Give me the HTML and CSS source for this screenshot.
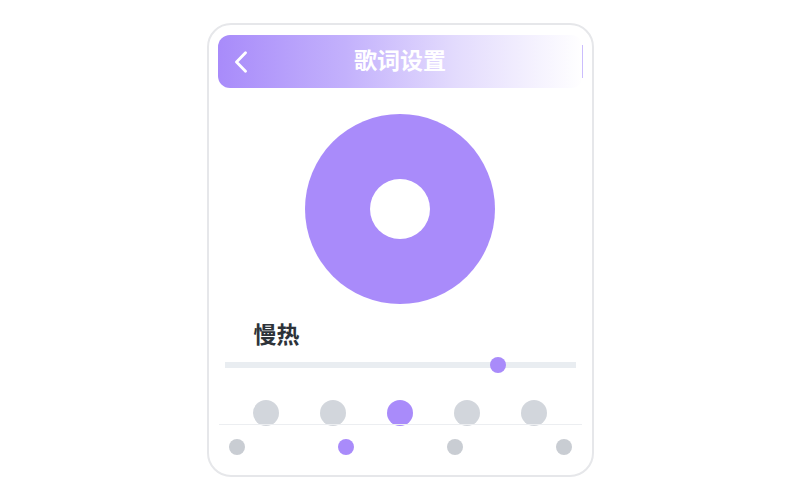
FILE: index.html
```html
<!DOCTYPE html>
<html lang="zh">
<head>
<meta charset="utf-8">
<link rel="stylesheet" href="styles.css">
</head>
<body>
<div class="card">
  <div class="header">
    <svg class="back" width="16" height="22" viewBox="0 0 16 22"><path d="M12.5 1.8 L3.5 11 L12.5 20.2" fill="none" stroke="#fff" stroke-width="2.8" stroke-linecap="round" stroke-linejoin="round"/></svg>
    <div class="title">歌词设置</div>
    <div></div>
  </div>
  <div class="donut"><div class="hole"></div></div>
  <div class="label">慢热</div>
  <div class="slider"><div class="thumb" style="left: 77.8%"></div></div>
  <div class="sizes">
    <span class="big"></span>
    <span class="big"></span>
    <span class="big on"></span>
    <span class="big"></span>
    <span class="big"></span>
  </div>
  <div class="speeds">
    <span class="small"></span>
    <span class="small on"></span>
    <span class="small"></span>
    <span class="small"></span>
  </div>
</div>
</body>
</html>
```

FILE: styles.css
```css
* { box-sizing: border-box; }
html, body { margin: 0; padding: 0; background: #fff; }
body {
  font-family: "Noto Sans CJK SC", "Noto Sans", sans-serif;
  padding-top: 23px;
}
.card {
  width: 387px;
  height: 454px;
  margin: 0 auto;
  border: 2px solid #e6e7ea;
  border-radius: 24px;
  padding: 10px 9px 0 9px;
  display: flex;
  flex-direction: column;
}
.header {
  position: relative;
  height: 53px;
  border-radius: 12px;
  background: linear-gradient(90deg, #a88bfa 0%, #c3b1fc 35%, #e3dbfd 65%, #ffffff 100%);
  display: grid;
  grid-template-columns: 1fr auto 1fr;
  align-items: center;
  padding-left: 15px;
}
.header::after {
  content: "";
  position: absolute;
  right: 0;
  top: 10px;
  height: 33px;
  width: 1px;
  background: #cbbdfd;
}
.back { display: block; }
.title {
  color: #fff;
  font-size: 23px;
  font-weight: 700;
  line-height: 30px;
  margin-left: -15px;
  margin-bottom: 5px;
}
.donut {
  width: 190px;
  height: 190px;
  border-radius: 50%;
  background: #a98bfa;
  margin: 26px auto 0;
  display: flex;
  align-items: center;
  justify-content: center;
}
.hole {
  width: 60px;
  height: 60px;
  border-radius: 50%;
  background: #fff;
}
.label {
  margin-top: 14px;
  padding-left: 36px;
  font-size: 23px;
  font-weight: 700;
  line-height: 30px;
  color: #2d3339;
}
.slider {
  position: relative;
  margin: 14px 7px 0;
  height: 6px;
  background: #e9edf1;
}
.thumb {
  position: absolute;
  top: -5px;
  width: 16px;
  height: 16px;
  margin-left: -8px;
  border-radius: 50%;
  background: #a98bfa;
}
.sizes {
  margin-top: 32px;
  display: flex;
  justify-content: center;
  gap: 41px;
}
.big {
  width: 26px;
  height: 26px;
  border-radius: 50%;
  background: #d2d6dc;
}
.big.on { background: #a98bfa; }
.speeds {
  position: relative;
  margin-top: -2px;
  margin-left: 1px;
  margin-right: 1px;
  border-top: 1px solid #eceef1;
  padding: 14px 10px 0 10px;
  display: flex;
  justify-content: space-between;
}
.small {
  width: 16px;
  height: 16px;
  border-radius: 50%;
  background: #c9cdd3;
}
.small.on { background: #a98bfa; }
```
